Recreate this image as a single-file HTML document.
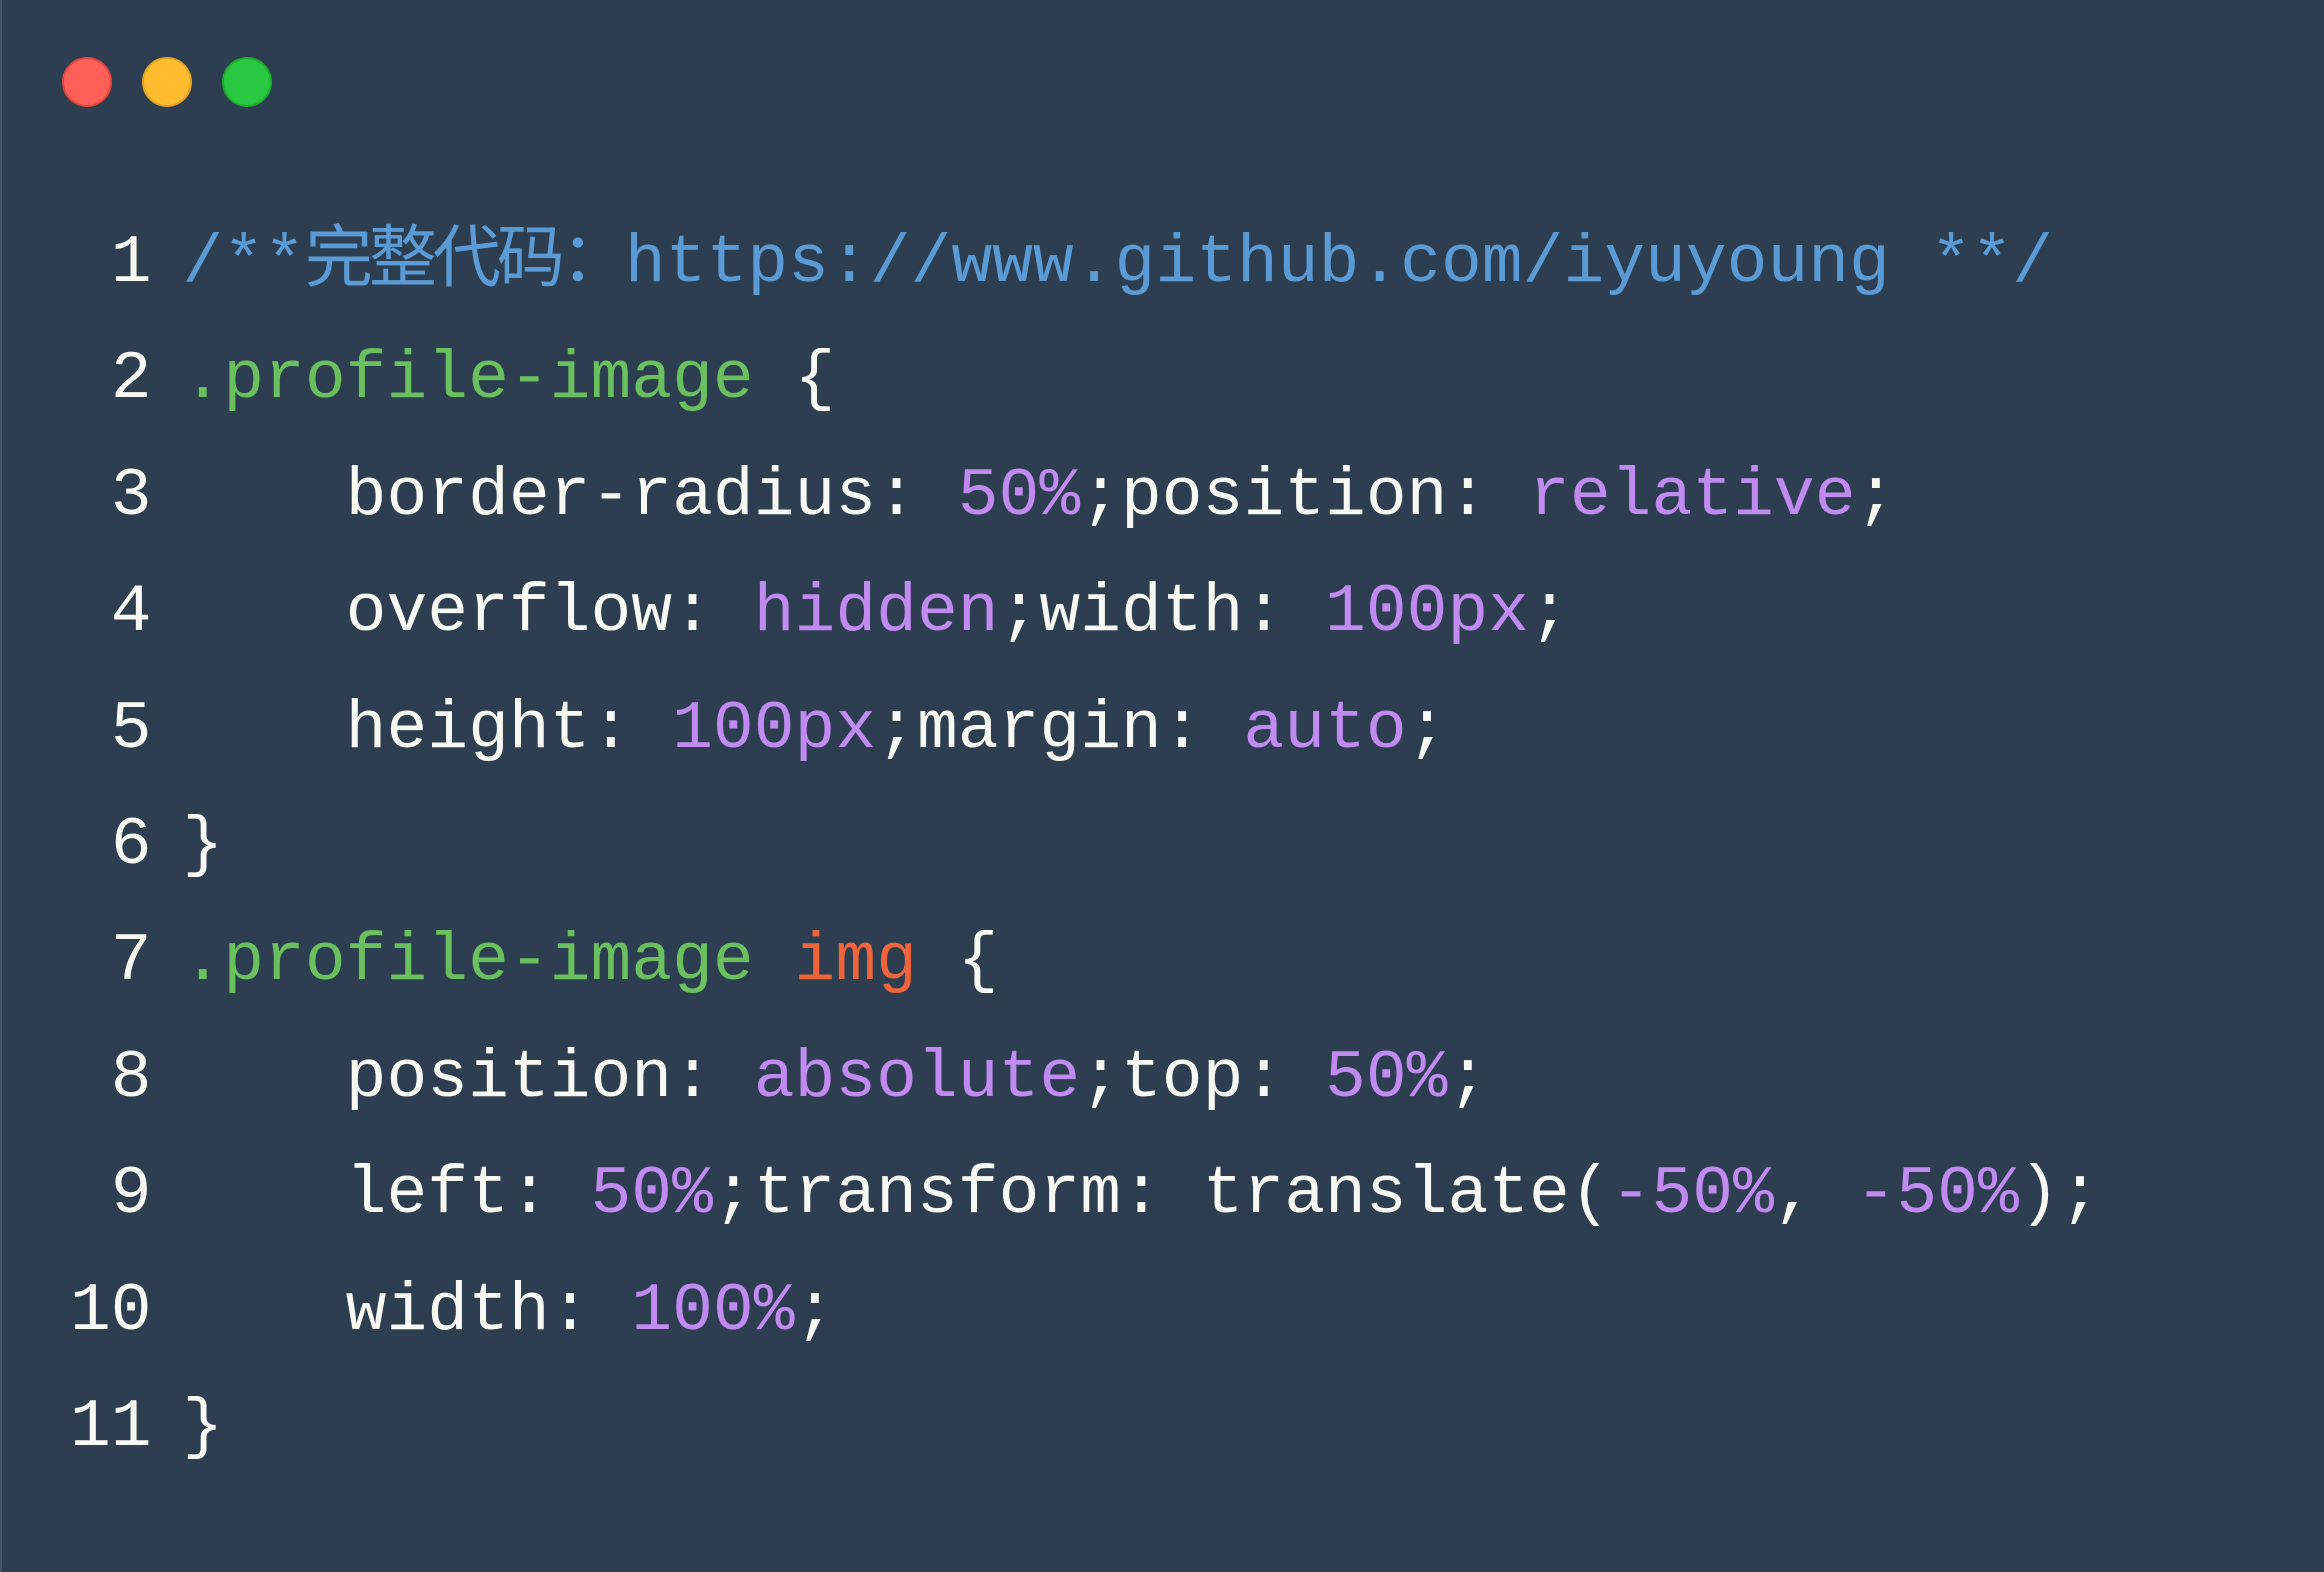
<!DOCTYPE html>
<html><head><meta charset="utf-8"><style>
html,body{margin:0;padding:0;}
body{width:2324px;height:1572px;background:#2c3e50;position:relative;overflow:hidden;border-left:2px solid #46566a;box-sizing:border-box;}
.dot{position:absolute;top:57px;width:50px;height:50px;border-radius:50%;box-sizing:border-box;}
.code{position:absolute;left:68px;top:206px;font-family:"Liberation Mono","Noto Sans CJK SC",monospace;font-size:68px;line-height:116.4px;color:#f8f8f2;white-space:pre;}
.n{margin-right:-10px}
.k{letter-spacing:-4px}
.c{color:#5b9bd5}.g{color:#6abf5e}.p{color:#c08af0}.r{color:#f0643c}
</style></head><body>
<div class="dot" style="left:60px;background:#fe5f57;border:2px solid #e0443e"></div>
<div class="dot" style="left:140px;background:#febc2e;border:2px solid #dea123"></div>
<div class="dot" style="left:220px;background:#28c840;border:2px solid #1aab29"></div>
<div class="code"><div><span class="n"> 1 </span><span class="c">/**<span class="k">完整代码：</span>https://www.github.com/iyuyoung **/</span></div><div><span class="n"> 2 </span><span class="g">.profile-image</span> {</div><div><span class="n"> 3 </span>    border-radius: <span class="p">50%</span>;position: <span class="p">relative</span>;</div><div><span class="n"> 4 </span>    overflow: <span class="p">hidden</span>;width: <span class="p">100px</span>;</div><div><span class="n"> 5 </span>    height: <span class="p">100px</span>;margin: <span class="p">auto</span>;</div><div><span class="n"> 6 </span>}</div><div><span class="n"> 7 </span><span class="g">.profile-image</span> <span class="r">img</span> {</div><div><span class="n"> 8 </span>    position: <span class="p">absolute</span>;top: <span class="p">50%</span>;</div><div><span class="n"> 9 </span>    left: <span class="p">50%</span>;transform: translate(<span class="p">-50%</span>, <span class="p">-50%</span>);</div><div><span class="n">10 </span>    width: <span class="p">100%</span>;</div><div><span class="n">11 </span>}</div></div>
</body></html>
